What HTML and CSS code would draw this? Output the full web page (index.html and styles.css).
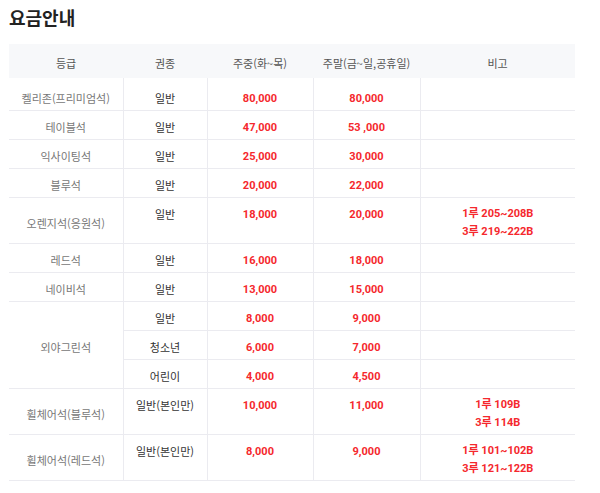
FILE: index.html
```html
<!DOCTYPE html>
<html lang="ko">
<head>
<meta charset="utf-8">
<title>요금안내</title>
<link rel="stylesheet" href="styles.css">
</head>
<body>
<h2 class="title">요금안내</h2>
<table class="fee">
  <colgroup>
    <col class="c1"><col class="c2"><col class="c3"><col class="c4"><col class="c5">
  </colgroup>
  <thead>
    <tr><th>등급</th><th>권종</th><th>주중(화~목)</th><th>주말(금~일,공휴일)</th><th>비고</th></tr>
  </thead>
  <tbody>
    <tr class="first"><td class="grade">켈리존(프리미엄석)</td><td class="kind">일반</td><td class="price">80,000</td><td class="price">80,000</td><td class="note"></td></tr>
    <tr><td class="grade">테이블석</td><td class="kind">일반</td><td class="price">47,000</td><td class="price">53 ,000</td><td class="note"></td></tr>
    <tr><td class="grade">익사이팅석</td><td class="kind">일반</td><td class="price">25,000</td><td class="price">30,000</td><td class="note"></td></tr>
    <tr><td class="grade">블루석</td><td class="kind">일반</td><td class="price">20,000</td><td class="price">22,000</td><td class="note"></td></tr>
    <tr><td class="grade">오렌지석(응원석)</td><td class="kind">일반</td><td class="price">18,000</td><td class="price">20,000</td><td class="note">1루 205~208B<br>3루 219~222B</td></tr>
    <tr><td class="grade">레드석</td><td class="kind">일반</td><td class="price">16,000</td><td class="price">18,000</td><td class="note"></td></tr>
    <tr><td class="grade">네이비석</td><td class="kind">일반</td><td class="price">13,000</td><td class="price">15,000</td><td class="note"></td></tr>
    <tr><td class="grade" rowspan="3">외야그린석</td><td class="kind">일반</td><td class="price">8,000</td><td class="price">9,000</td><td class="note"></td></tr>
    <tr><td class="kind">청소년</td><td class="price">6,000</td><td class="price">7,000</td><td class="note"></td></tr>
    <tr><td class="kind">어린이</td><td class="price">4,000</td><td class="price">4,500</td><td class="note"></td></tr>
    <tr><td class="grade">휠체어석(블루석)</td><td class="kind">일반(본인만)</td><td class="price">10,000</td><td class="price">11,000</td><td class="note">1루 109B<br>3루 114B</td></tr>
    <tr class="last"><td class="grade">휠체어석(레드석)</td><td class="kind">일반(본인만)</td><td class="price">8,000</td><td class="price">9,000</td><td class="note">1루 101~102B<br>3루 121~122B</td></tr>
  </tbody>
</table>
</body>
</html>
```
FILE: styles.css
```css
html, body {
  margin: 0;
  background: #fff;
}
body {
  padding: 0 25px 0 9px;
  font-family: "Noto Sans CJK KR", "Noto Sans", sans-serif;
  color: #333;
}
.title {
  margin: 0 0 15px;
  padding-top: 5px;
  font-size: 18px;
  line-height: 24px;
  font-weight: 700;
  color: #222;
}
.fee {
  width: 566px;
  border-collapse: collapse;
  table-layout: fixed;
  font-size: 11px;
}
.c1 { width: 114px; }
.c2 { width: 84px; }
.c3 { width: 106px; }
.c4 { width: 107px; }
.c5 { width: 155px; }
.fee th {
  background: #f7f8fa;
  font-weight: 400;
  color: #555;
  padding: 11px 0 6px;
  line-height: 17px;
  text-align: center;
}
.fee td {
  padding: 8px 0 3px;
  line-height: 17px;
  text-align: center;
  vertical-align: top;
  border-bottom: 1px solid #ebebf0;
  border-left: 1px solid #ebebf0;
}
.fee tr.first td { padding-top: 12px; }
.fee td.grade {
  border-left: none;
  vertical-align: middle;
  color: #777;
}
.fee td.kind { color: #333; }
.fee td.price, .fee td.note {
  color: #f5282d;
  font-weight: 700;
  font-family: Roboto, "Noto Sans CJK KR", sans-serif;
  font-size: 11px;
}
.fee td.note {
  padding: 7px 0 2px;
  line-height: 18px;
}
```
